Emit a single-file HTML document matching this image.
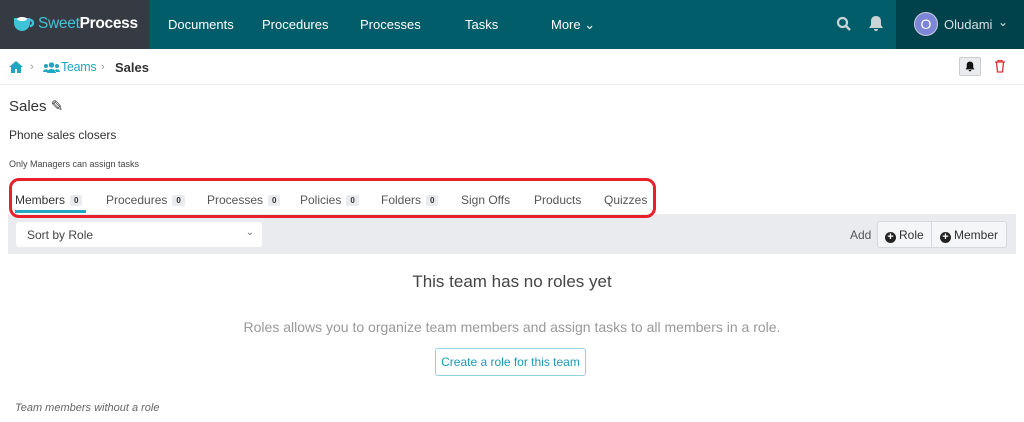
<!DOCTYPE html><html><head><style>
*{box-sizing:border-box;margin:0;padding:0}
body{width:1024px;height:422px;overflow:hidden;background:#fff;font-family:"Liberation Sans",sans-serif;position:relative;color:#333}
.a{position:absolute;white-space:nowrap}
.nav{font-size:13px;color:#fff;top:17px}
.tab{font-size:12px;color:#555;top:193px}
.b{display:inline-block;background:#e9ebee;font-size:8px;font-weight:bold;padding:1px 4px;margin-left:5px;border-radius:2px;color:#333;vertical-align:1px}
.pc{display:inline-block;width:11px;height:11px;border-radius:50%;background:#222;color:#fff;font-size:11px;line-height:10px;text-align:center;font-weight:bold;margin-right:3px;vertical-align:-1px}
</style></head><body>
<div class="a" style="left:0;top:0;width:150px;height:49px;background:#363a42"></div>
<div class="a" style="left:150px;top:0;width:746px;height:49px;background:#005d69"></div>
<div class="a" style="left:896px;top:0;width:128px;height:49px;background:#00424b"></div>
<svg class="a" style="left:12px;top:15px" width="24" height="18" viewBox="0 0 24 18"><path d="M2 3h16v5a8 8 0 0 1-16 0z" fill="#3ec3d8"/><path d="M18 5a3 3 0 0 1 0 6" stroke="#3ec3d8" stroke-width="2.5" fill="none"/><ellipse cx="10" cy="4" rx="5" ry="2" fill="#fff"/></svg>
<div class="a" style="left:38px;top:15px;font-size:15.5px;letter-spacing:-0.3px;color:#3ec3d8">Sweet<span style="color:#fff;font-weight:bold">Process</span></div>
<div class="a nav" style="left:168px">Documents</div>
<div class="a nav" style="left:262px">Procedures</div>
<div class="a nav" style="left:360px">Processes</div>
<div class="a nav" style="left:465px">Tasks</div>
<div class="a nav" style="left:551px">More ⌄</div>
<svg class="a" style="left:836px;top:16px" width="16" height="16" viewBox="0 0 16 16"><circle cx="6.5" cy="6.5" r="4.5" stroke="#c8d3d5" stroke-width="2.2" fill="none"/><path d="M10 10l4 4" stroke="#c8d3d5" stroke-width="2.5"/></svg>
<svg class="a" style="left:869px;top:15px" width="14" height="17" viewBox="0 0 14 17"><path d="M7 1c-3 0-5 2-5 5v4l-2 3h14l-2-3V6c0-3-2-5-5-5zM5 14h4a2 2 0 0 1-4 0z" fill="#c8d3d5"/></svg>
<div class="a" style="left:914px;top:12px;width:24px;height:24px;border-radius:50%;background:#7c86d6;color:#fff;font-size:14px;text-align:center;line-height:22px;border:1px solid #ccd">O</div>
<div class="a" style="left:944px;top:17px;font-size:13px;color:#d8e0e2">Oludami</div>
<div class="a" style="left:998px;top:15px;font-size:12px;color:#d8e0e2">⌄</div>
<svg class="a" style="left:9px;top:61px" width="14" height="12" viewBox="0 0 14 12"><path d="M7 0L0 6h2v6h4V8h2v4h4V6h2z" fill="#22a6c2"/></svg>
<div class="a" style="left:30px;top:61px;font-size:11px;color:#999">›</div>
<svg class="a" style="left:43px;top:62px" width="17" height="11" viewBox="0 0 17 11"><circle cx="8.5" cy="3" r="2.7" fill="#22a6c2"/><circle cx="3" cy="4" r="2" fill="#22a6c2"/><circle cx="14" cy="4" r="2" fill="#22a6c2"/><path d="M4 11a4.5 4 0 0 1 9 0zM0 10a3 3 0 0 1 5-2v2zM17 10a3 3 0 0 0-5-2v2z" fill="#22a6c2"/></svg>
<div class="a" style="left:61px;top:60px;font-size:12.5px;letter-spacing:-0.3px;color:#22a6c2">Teams</div>
<div class="a" style="left:101px;top:61px;font-size:11px;color:#999">›</div>
<div class="a" style="left:115px;top:60px;font-size:13px;color:#333;font-weight:bold">Sales</div>
<div class="a" style="left:959px;top:57px;width:22px;height:19px;background:#e9ebee;border:1px solid #ccc;border-radius:2px"></div>
<svg class="a" style="left:965px;top:61px" width="10" height="11" viewBox="0 0 14 17"><path d="M7 1c-3 0-5 2-5 5v4l-2 3h14l-2-3V6c0-3-2-5-5-5zM5 14h4a2 2 0 0 1-4 0z" fill="#111"/></svg>
<svg class="a" style="left:995px;top:60px" width="10" height="13" viewBox="0 0 10 13"><path d="M0 2h10M3 2V0.5h4V2M1.5 2l1 10h5l1-10" stroke="#e03030" stroke-width="1.3" fill="none"/></svg>
<div class="a" style="left:0;top:84px;width:1024px;height:1px;background:#eee"></div>
<div class="a" style="left:9px;top:97px;font-size:15px;color:#333">Sales ✎</div>
<div class="a" style="left:9px;top:128px;font-size:12px;color:#333">Phone sales closers</div>
<div class="a" style="left:9px;top:159px;font-size:9px;color:#444">Only Managers can assign tasks</div>
<div class="a tab" style="left:15px;color:#333">Members<span class="b">0</span></div>
<div class="a" style="left:15px;top:210px;width:71px;height:3px;background:#22a6c2"></div>
<div class="a tab" style="left:106px">Procedures<span class="b">0</span></div>
<div class="a tab" style="left:207px">Processes<span class="b">0</span></div>
<div class="a tab" style="left:300px">Policies<span class="b">0</span></div>
<div class="a tab" style="left:381px">Folders<span class="b">0</span></div>
<div class="a tab" style="left:461px">Sign Offs</div>
<div class="a tab" style="left:534px">Products</div>
<div class="a tab" style="left:604px">Quizzes</div>
<div class="a" style="left:8px;top:214px;width:1008px;height:40px;background:#e9ebee"></div>
<div class="a" style="left:9px;top:178px;width:647px;height:40px;border:3.5px solid #e8202a;border-radius:10px"></div>
<div class="a" style="left:16px;top:222px;width:246px;height:25px;background:#fff;border-radius:3px;font-size:12px;color:#444;padding:6px 11px">Sort by Role<span style="position:absolute;right:8px;top:5px;font-size:10px;color:#777">⌄</span></div>
<div class="a" style="left:850px;top:228px;font-size:12px;color:#555">Add</div>
<div class="a" style="left:877px;top:221px;width:130px;height:27px;background:#f5f6f7;border:1px solid #d6d9dc;border-radius:3px"></div>
<div class="a" style="left:931px;top:222px;width:1px;height:25px;background:#d6d9dc"></div>
<div class="a" style="left:885px;top:228px;font-size:12px;color:#333"><span class="pc">+</span>Role</div>
<div class="a" style="left:940px;top:228px;font-size:12px;color:#333"><span class="pc">+</span>Member</div>
<div class="a" style="left:0;top:272px;width:1024px;text-align:center;font-size:17px;color:#444">This team has no roles yet</div>
<div class="a" style="left:0;top:319px;width:1024px;text-align:center;font-size:14px;color:#999">Roles allows you to organize team members and assign tasks to all members in a role.</div>
<div class="a" style="left:435px;top:348px;width:151px;height:28px;border:1px solid #8fd3e0;border-radius:3px;font-size:12px;color:#1a9ab5;text-align:center;line-height:26px">Create a role for this team</div>
<div class="a" style="left:15px;top:402px;font-size:11px;color:#666;font-style:italic">Team members without a role</div>
</body></html>
